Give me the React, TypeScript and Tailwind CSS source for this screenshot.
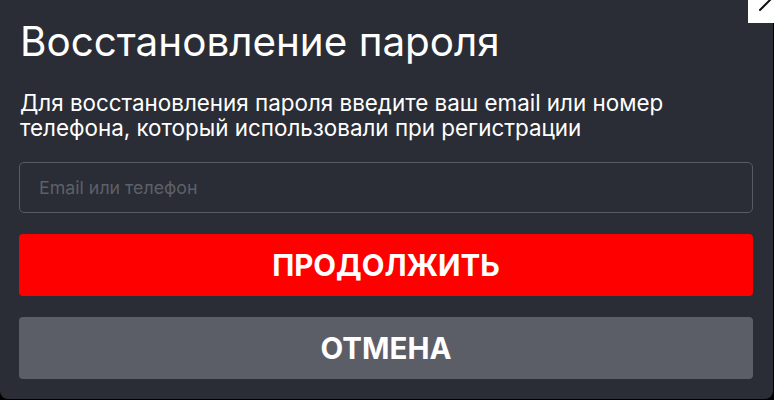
export default function App() {
  return (
    <div className="w-[774px] h-[400px] bg-black relative overflow-hidden font-['Inter',sans-serif]">
      {/* Dialog panel */}
      <div className="w-[773px] h-[399px] bg-[#2a2d35] rounded-b-[8px] px-[19px] pt-[18px] flex flex-col">
        <h1 className="text-white text-[40.4px] leading-[48px] font-normal ml-[1px]">
          Восстановление пароля
        </h1>
        <p className="text-white text-[22.4px] leading-[25px] mt-[24px] ml-[1px] pr-[60px]">
          Для восстановления пароля введите ваш email или номер телефона, который использовали при регистрации
        </p>
        <input
          className="mt-[22px] h-[51px] w-[734px] rounded-[5px] border border-[#585b64] bg-transparent px-[19px] text-[17.8px] text-white placeholder:text-[#5d6069] outline-none"
          placeholder="Email или телефон"
        />
        <button className="mt-[21px] h-[62px] w-[734px] rounded-[4px] bg-[#ff0000] text-white text-[29.5px] font-bold uppercase">
          Продолжить
        </button>
        <button className="mt-[21px] h-[62px] w-[734px] rounded-[4px] bg-[#5b5e66] text-white text-[29.5px] font-bold uppercase">
          Отмена
        </button>
      </div>

      {/* Close button, partly outside the view */}
      <div className="absolute top-0 left-[748px] w-[40px] h-[23px] bg-white">
        <svg width="40" height="23" viewBox="0 0 40 23" className="absolute left-0 top-0">
          <line x1="12" y1="10" x2="26" y2="-4" stroke="#111" strokeWidth="2" strokeLinecap="round" />
        </svg>
      </div>
    </div>
  );
}
